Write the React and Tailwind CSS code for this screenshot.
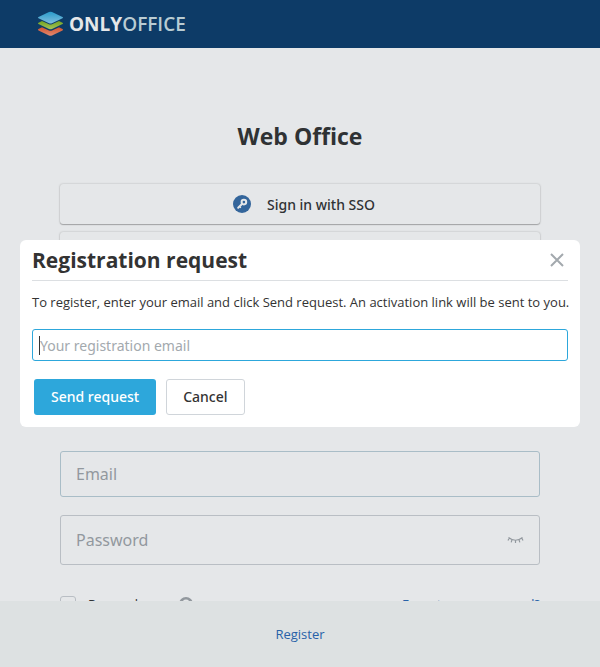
import React from "react";

function Logo() {
  return (
    <a href="#" className="flex items-center gap-[5px]" aria-label="ONLYOFFICE">
      <svg width="27" height="26" viewBox="0 0 27 26" aria-hidden="true">
        <defs>
          <linearGradient id="lr" x1="0" y1="0" x2="0" y2="1">
            <stop offset="0" stopColor="#d3542f" />
            <stop offset="1" stopColor="#e08a72" />
          </linearGradient>
          <linearGradient id="lg" x1="0" y1="0" x2="0" y2="1">
            <stop offset="0" stopColor="#72a322" />
            <stop offset="1" stopColor="#a6c45a" />
          </linearGradient>
          <linearGradient id="lb" x1="0" y1="0" x2="0" y2="1">
            <stop offset="0" stopColor="#2a9bca" />
            <stop offset="1" stopColor="#80bedd" />
          </linearGradient>
        </defs>
        <path d="M12 24.5 1.500 19.400q-1.200-.7 0-1.300L5 16.300l7 3.200q1.500.6 3 0l7-3.200 3.500 1.800q1.200.6 0 1.300L15 24.500q-1.500.6-3 0Z" fill="url(#lr)" />
        <path d="M12 18 1.500 13.100q-1.200-.7 0-1.300L5 10l7 3.200q1.500.6 3 0l7-3.200 3.500 1.800q1.200.6 0 1.300L15 18q-1.500.6-3 0Z" fill="url(#lg)" />
        <path d="M12 12.200 1.500 7.300Q.3 6.600 1.500 6L12 1.100q1.500-.6 3 0L25.500 6q1.200.6 0 1.300L15 12.200q-1.500.6-3 0Z" fill="url(#lb)" />
      </svg>
      <span className="text-[19px] leading-6 text-[#e5e7e9]">
        <span className="font-bold">ONLY</span>
        <span className="font-semibold text-[#b9ccd3]">OFFICE</span>
      </span>
    </a>
  );
}

const ssoButton =
  "flex h-10 w-full items-center justify-center gap-4 rounded-[3px] bg-[#e5e7e9] pr-1 pl-3 font-['Noto_Sans',sans-serif] text-[14px] font-medium text-[#2f3234] shadow-[0_1px_1px_rgba(0,0,0,0.24),0_0_2px_rgba(0,0,0,0.25)]";

function SsoIcon() {
  return (
    <svg width="18" height="18" viewBox="0 0 18 18" aria-hidden="true">
      <circle cx="9" cy="9" r="9" fill="#33659b" />
      <circle cx="10.900" cy="7.100" r="2.300" fill="none" stroke="#e5e7e9" strokeWidth="2" />
      <path d="M9 9 5.200 12.800" fill="none" stroke="#e5e7e9" strokeWidth="2" strokeLinecap="round" />
      <path d="m7 12 .9.900" fill="none" stroke="#e5e7e9" strokeWidth="1.200" />
    </svg>
  );
}

function SignIn() {
  return (
    <main className="min-h-0 flex-1 overflow-hidden px-[60px] pt-[72px]">
      <h1 className="text-center text-[23px] leading-8 font-bold text-[#2f3234]">Web Office</h1>
      <div className="mt-8 flex flex-col gap-2">
        <button type="button" className={ssoButton}>
          <SsoIcon />
          Sign in with SSO
        </button>
        <button type="button" className={ssoButton}>Sign in with Google</button>
      </div>
      <form className="mt-[179px]">
        <input
          type="email"
          aria-label="Email"
          placeholder="Email"
          className="block h-[46px] w-full rounded-[3px] border border-[#a9bdc7] px-[15px] font-['Noto_Sans',sans-serif] text-[16px] outline-none placeholder:text-[#92989e]"
        />
        <div className="mt-[18px] flex h-[50px] items-center rounded-[3px] border border-[#b9bec4] px-[15px]">
          <input
            type="password"
            aria-label="Password"
            placeholder="Password"
            className="min-w-0 flex-1 font-['Noto_Sans',sans-serif] text-[16px] outline-none placeholder:text-[#92989e]"
          />
          <button type="button" aria-label="Show password">
            <svg width="17" height="16" viewBox="0 0 17 16" fill="none" stroke="#92989e" strokeWidth="1.200" aria-hidden="true">
              <path d="M1.500 5.500q7 5.500 14 0M2.300 6 1 8.500M5 7.600l-.8 2.700M8.500 8.200V11M12 7.600l.8 2.700M14.700 6 16 8.500" />
            </svg>
          </button>
        </div>
        <div className="mt-[29px] flex items-center justify-between text-[13px] leading-5">
          <div className="flex items-center">
            <label className="flex items-center gap-3 text-[#2f3234]">
              <input type="checkbox" className="size-4 appearance-none rounded-[3px] border border-[#b9bec4]" />
              Remember
            </label>
            <button type="button" aria-label="Help" className="ml-6">
              <svg width="14" height="14" viewBox="0 0 13 13" aria-hidden="true">
                <circle cx="6.500" cy="6.500" r="5.300" fill="none" stroke="#92989e" strokeWidth="2.400" />
                <path d="M5 5.600q0-1.400 1.500-1.400T8 5.500q0 .8-1.500 1.600v.6M6.500 8.500v1" fill="none" stroke="#92989e" />
              </svg>
            </button>
          </div>
          <a href="#" className="text-[#2862a8]">Forgot your password?</a>
        </div>
      </form>
    </main>
  );
}

function RegisterDialog() {
  return (
    <div className="fixed inset-0 flex items-center justify-center px-5">
      <section
        role="dialog"
        aria-modal="true"
        aria-labelledby="dialog-title"
        className="w-full max-w-[560px] rounded-md bg-white px-3 pb-3 text-[#333]"
      >
        <header className="flex h-[41px] items-center justify-between border-b border-[#dcdfe2]">
          <h2 id="dialog-title" className="text-[21px] leading-7 font-bold">Registration request</h2>
          <button type="button" aria-label="Close" className="px-1">
            <svg width="14" height="14" viewBox="0 0 14 14" fill="none" stroke="#a3a9ae" strokeWidth="2" aria-hidden="true">
              <path d="m1 1 12 12M13 1 1 13" />
            </svg>
          </button>
        </header>
        <label htmlFor="registration-email" className="mt-[11px] block text-[13px] leading-5 min-[600px]:whitespace-nowrap">
          To register, enter your email and click Send request. An activation link will be sent to you.
        </label>
        <div className="mt-[17px] flex h-8 items-center rounded-[3px] border border-[#2da7db] px-[6px]">
          <span className="h-[19px] w-px bg-[#333]" />
          <input
            id="registration-email"
            type="email"
            placeholder="Your registration email"
            className="min-w-0 flex-1 font-['Noto_Sans',sans-serif] text-[14px] outline-none placeholder:text-[#a3a9ae]"
          />
        </div>
        <div className="mt-[18px] flex gap-[10px] px-[2px] font-['Noto_Sans',sans-serif] text-[14px] leading-5 font-medium">
          <button type="button" className="h-9 rounded-[3px] bg-[#2da7db] px-[17px] text-white">Send request</button>
          <button type="button" className="h-9 rounded-[3px] border border-[#d0d5da] px-4">Cancel</button>
        </div>
      </section>
    </div>
  );
}

export default function App() {
  return (
    <div className="flex h-screen flex-col bg-[#e5e7e9] font-['Open_Sans','Noto_Sans',sans-serif]">
      <header className="flex h-12 shrink-0 items-center bg-[#0d3b67] px-[37px]">
        <Logo />
      </header>
      <SignIn />
      <footer className="flex h-[66px] shrink-0 items-center justify-center bg-[#dde1e2]">
        <a href="#" className="text-[13px] leading-5 text-[#2862a8]">Register</a>
      </footer>
      <RegisterDialog />
    </div>
  );
}
